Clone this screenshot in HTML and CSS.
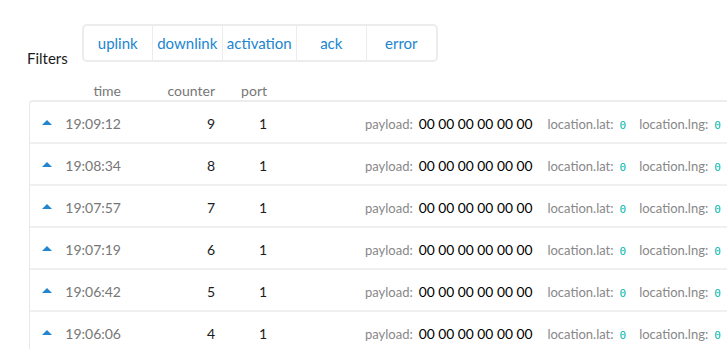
FILE: index.html
```html
<!DOCTYPE html>
<html lang="en">
<head>
    <meta charset="UTF-8">
    <title>Device data</title>
    <link rel="stylesheet" href="styles.css">
</head>
<body>
    <div class="page">
        <div class="filters">
            <span class="filters-label">Filters</span>
            <div class="filter-group">
                <button class="filter-btn first">uplink</button>
                <button class="filter-btn">downlink</button>
                <button class="filter-btn wide">activation</button>
                <button class="filter-btn">ack</button>
                <button class="filter-btn">error</button>
            </div>
        </div>

        <div class="head-row">
            <span class="col-icon"></span>
            <span class="col-time">time</span>
            <span class="col-counter">counter</span>
            <span class="col-port">port</span>
        </div>

        <div class="messages">
            <div class="msg-row">
                <span class="col-icon"><span class="arrow-up"></span></span>
                <span class="col-time">19:09:12</span>
                <span class="col-counter">9</span>
                <span class="col-port">1</span>
                <div class="fields">
                    <span class="key">payload:</span><span class="payload">00 00 00 00 00 00</span>
                    <span class="key">location.lat:</span><code class="num">0</code>
                    <span class="key">location.lng:</span><code class="num">0</code>
                </div>
            </div>
            <div class="msg-row">
                <span class="col-icon"><span class="arrow-up"></span></span>
                <span class="col-time">19:08:34</span>
                <span class="col-counter">8</span>
                <span class="col-port">1</span>
                <div class="fields">
                    <span class="key">payload:</span><span class="payload">00 00 00 00 00 00</span>
                    <span class="key">location.lat:</span><code class="num">0</code>
                    <span class="key">location.lng:</span><code class="num">0</code>
                </div>
            </div>
            <div class="msg-row">
                <span class="col-icon"><span class="arrow-up"></span></span>
                <span class="col-time">19:07:57</span>
                <span class="col-counter">7</span>
                <span class="col-port">1</span>
                <div class="fields">
                    <span class="key">payload:</span><span class="payload">00 00 00 00 00 00</span>
                    <span class="key">location.lat:</span><code class="num">0</code>
                    <span class="key">location.lng:</span><code class="num">0</code>
                </div>
            </div>
            <div class="msg-row">
                <span class="col-icon"><span class="arrow-up"></span></span>
                <span class="col-time">19:07:19</span>
                <span class="col-counter">6</span>
                <span class="col-port">1</span>
                <div class="fields">
                    <span class="key">payload:</span><span class="payload">00 00 00 00 00 00</span>
                    <span class="key">location.lat:</span><code class="num">0</code>
                    <span class="key">location.lng:</span><code class="num">0</code>
                </div>
            </div>
            <div class="msg-row">
                <span class="col-icon"><span class="arrow-up"></span></span>
                <span class="col-time">19:06:42</span>
                <span class="col-counter">5</span>
                <span class="col-port">1</span>
                <div class="fields">
                    <span class="key">payload:</span><span class="payload">00 00 00 00 00 00</span>
                    <span class="key">location.lat:</span><code class="num">0</code>
                    <span class="key">location.lng:</span><code class="num">0</code>
                </div>
            </div>
            <div class="msg-row">
                <span class="col-icon"><span class="arrow-up"></span></span>
                <span class="col-time">19:06:06</span>
                <span class="col-counter">4</span>
                <span class="col-port">1</span>
                <div class="fields">
                    <span class="key">payload:</span><span class="payload">00 00 00 00 00 00</span>
                    <span class="key">location.lat:</span><code class="num">0</code>
                    <span class="key">location.lng:</span><code class="num">0</code>
                </div>
            </div>
        </div>
    </div>
</body>
</html>
```

FILE: styles.css
```css
body {
    margin: 0;
    font-family: Lato, "Open Sans", sans-serif;
    background: white;
    color: #1b1c1d;
    overflow: hidden;
}
.page {
    padding: 24px 0 0 27px;
    width: 900px;
}
.filters {
    display: flex;
    align-items: flex-end;
}
.filters-label {
    font-size: 15px;
    margin-right: 14px;
    margin-bottom: -5px;
}
.filter-group {
    display: flex;
    border: 2px solid #ececec;
    border-radius: 5px;
    background: white;
}
.filter-btn {
    box-sizing: border-box;
    width: 70px;
    height: 34px;
    padding: 0;
    border: none;
    border-left: 1px solid #ececec;
    background: none;
    color: #2185d0;
    font-family: Lato, sans-serif;
    font-size: 15px;
    cursor: pointer;
}
.filter-btn.first {
    border-left: none;
    width: 68px;
}
.filter-btn.wide {
    width: 74px;
}
.head-row {
    display: flex;
    margin-top: 20px;
    height: 18px;
    line-height: 18px;
    font-size: 14px;
    color: #777;
}
.messages {
    margin-left: 2px;
    border-top: 2px solid #ececec;
    border-left: 1px solid #e8e8e8;
    border-top-left-radius: 4px;
}
.msg-row {
    display: flex;
    align-items: center;
    height: 38px;
    padding-top: 2px;
    border-bottom: 2px solid #f0f0f0;
    font-size: 14px;
    white-space: nowrap;
}
.col-icon {
    width: 35px;
    flex: none;
}
.head-row .col-icon {
    width: 38px;
}
.arrow-up {
    display: block;
    margin-left: 12px;
    width: 0;
    height: 0;
    border-left: 5px solid transparent;
    border-right: 5px solid transparent;
    border-bottom: 5px solid #2185d0;
    margin-top: -2px;
}
.col-time {
    width: 56px;
    text-align: right;
    color: #777;
    flex: none;
}
.col-counter {
    width: 94px;
    text-align: right;
    flex: none;
}
.col-port {
    width: 52px;
    text-align: right;
    flex: none;
}
.fields {
    margin-left: 98px;
    display: flex;
    align-items: baseline;
}
.key {
    font-size: 13px;
    color: #888;
    margin-right: 6px;
}
.payload {
    font-size: 13.8px;
    color: #000;
    margin-right: 15px;
}
.num {
    font-family: "DejaVu Sans Mono", monospace;
    font-size: 11px;
    color: #00b5ad;
    margin-right: 13px;
}
```
